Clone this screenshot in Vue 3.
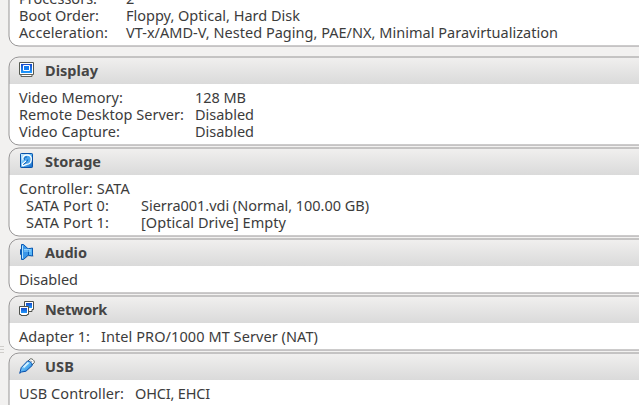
<script setup>
import { onMounted, ref } from 'vue'

// Each text entry is [text, width]; col is the width of the label column.
const cards = [
  { rows: [
    { label: ['Processors:', 78], value: ['2', 8], col: 107 },
    { label: ['Boot Order:', 80], value: ['Floppy, Optical, Hard Disk', 174], col: 107 },
    { label: ['Acceleration:', 89], value: ['VT-x/AMD-V, Nested Paging, PAE/NX, Minimal Paravirtualization', 432], col: 107 }
  ] },
  { icon: 'display', title: ['Display', 53], rows: [
    { label: ['Video Memory:', 104], value: ['128 MB', 51], col: 176 },
    { label: ['Remote Desktop Server:', 165], value: ['Disabled', 59], col: 176 },
    { label: ['Video Capture:', 101], value: ['Disabled', 59], col: 176 }
  ] },
  { icon: 'storage', title: ['Storage', 56], rows: [
    { label: ['Controller: SATA', 111], col: 122 },
    { label: ['SATA Port 0:', 83], value: ['Sierra001.vdi (Normal, 100.00 GB)', 228], col: 115, nested: true },
    { label: ['SATA Port 1:', 83], value: ['[Optical Drive] Empty', 145], col: 115, nested: true }
  ] },
  { icon: 'audio', title: ['Audio', 42], rows: [{ label: ['Disabled', 59], col: 90 }] },
  { icon: 'network', title: ['Network', 62], rows: [
    { label: ['Adapter 1:', 71], value: ['Intel PRO/1000 MT Server (NAT)', 217], col: 82 }
  ] },
  { icon: 'usb', title: ['USB', 29], rows: [
    { label: ['USB Controller:', 105], value: ['OHCI, EHCI', 75], col: 116 },
    { label: ['Device Filters:', 98], value: ['0 (0 active)', 76], col: 116 }
  ] }
]

const root = ref(null)
onMounted(() => {
  root.value.querySelectorAll('[data-width]').forEach((el) => {
    const extra = Number(el.dataset.width) - el.getBoundingClientRect().width
    el.style.letterSpacing = extra / el.textContent.length + 'px'
  })
})
</script>

<template>
  <main ref="root" class="details">
    <div class="splitter"><i /><i /><i /></div>
    <div class="cards">
      <section v-for="(card, n) in cards" :key="n" class="card" :class="{ system: !card.title }">
        <div class="panel">
          <header v-if="card.title">
            <svg class="icon" viewBox="0 0 16 16">
              <defs>
                <linearGradient id="blue" x1="0" y1="0" x2="0" y2="1"><stop stop-color="#1648c8" /><stop offset="1" stop-color="#209cff" /></linearGradient>
                <linearGradient id="light" x1="0" y1="0" x2="1" y2="1"><stop stop-color="#d8f3ff" /><stop offset=".5" stop-color="#59b5f4" /><stop offset="1" stop-color="#1264c3" /></linearGradient>
              </defs>
              <g v-if="card.icon === 'display'">
                <path d="M.5.5h14v12H13v2H2v-2H.5z" fill="#fff" stroke="#555950" />
                <path d="M2 2h11v9H2z" fill="url(#blue)" />
                <path d="M4.5 3.5h6v5h-6z" fill="#167bec" stroke="#fff" />
                <path d="M1 12.5h13M2 14.5h11" stroke="#62635e" />
              </g>
              <g v-else-if="card.icon === 'storage'">
                <rect x="1.5" y=".5" width="12" height="14" rx=".7" fill="url(#light)" stroke="#0852a9" />
                <path d="M4.2 7.2C2.8 4.3 5 2 8 2s4.6 1.8 4.3 4.5c-.2 2.8-2.2 4.8-4.6 4.8L4 12.9c-1.1-.5-.6-2 .2-2.5l3-2.4" fill="#4ca6ee" stroke="#fff" stroke-width="1.3" />
                <path d="M5.4 6.8C5 4.5 6.4 3.6 8 4M4.4 11.5 8 8.5l.8-2" fill="none" stroke="#1261b2" />
              </g>
              <g v-else-if="card.icon === 'audio'">
                <path d="M4 15.5 9.5 12H15" fill="none" stroke="#8d9295" opacity=".5" />
                <path d="M1.5 5.5h2v5h-2z" fill="#9bd8ff" stroke="#0859b4" />
                <path d="M9.5 4.5h1.5l2.5-.5v8l-2.5-.5H9.5z" fill="#58b6f6" stroke="#0859b4" />
                <path d="M2.5.5h2l5 4.7v5.6l-5 4.7h-2z" fill="#3b96e8" stroke="#0859b4" />
                <path d="M3.5 1.5v13" stroke="#b8e5ff" />
                <path d="M5 5.5h6.5M5 7h7" stroke="#91d3ff" />
              </g>
              <g v-else-if="card.icon === 'network'">
                <path d="M5.5.5h9v8H13v2H7v-2H5.5z" fill="#fff" stroke="#4e514c" />
                <path d="M7 2h6v5H7z" fill="url(#blue)" />
                <path d="M.5 5.5h9v8H8v1H2v-1H.5z" fill="#fff" stroke="#4e514c" />
                <path d="M2 7h6v5H2z" fill="url(#blue)" />
              </g>
              <g v-else>
                <path d="m9 3 2.2-2c1.2-1.1 5 1.8 4 3.7L13 7" fill="#fff" stroke="#555951" />
                <path d="M.7 15.3 2.3 9.5 8.5 3c2.3-.2 5.1 2 4.7 4.5L7 13.2l-4.5.8z" fill="url(#light)" stroke="#074eaa" />
                <path d="m4.5 9.3 5-4.7" stroke="#d8f3ff" stroke-width="1.8" />
                <path d="m12 2.8.8.8" stroke="#50544f" />
              </g>
            </svg>
            <h2><span :data-width="card.title[1]">{{ card.title[0] }}</span></h2>
          </header>
          <div class="rows">
            <div v-for="row in card.rows" :key="row.label[0]" class="row" :class="{ nested: row.nested }">
              <div class="label" :style="{ width: row.col + 'px' }"><span :data-width="row.label[1]">{{ row.label[0] }}</span></div>
              <div v-if="row.value"><span :data-width="row.value[1]">{{ row.value[0] }}</span></div>
            </div>
          </div>
        </div>
        <svg class="frame"><rect class="outline" x="1" y="1" width="110%" rx="10" /></svg>
      </section>
    </div>
  </main>
</template>

<style>
body { background: #f2f1f0; overflow: hidden; }
</style>
<style scoped>
.details { display: flex; height: 405px; overflow: hidden; background: #f2f1f0; color: #3c3c3c; font: 14.5px/17px "Noto Sans", sans-serif; }
.splitter { display: flex; flex: 0 0 8px; flex-direction: column; gap: 2px; padding-top: 346px; box-sizing: border-box; }
.splitter i { width: 4px; height: 1px; background: #cfcdca; }
.cards { display: flex; flex: 1; flex-direction: column; gap: 1px; min-width: 0; }
.card { position: relative; flex: none; padding: 1px 0 1px 1px; }
.panel { border-radius: 10px 0 0 10px; background: #fff; overflow: hidden; }
.frame { position: absolute; inset: 0; width: 100%; height: 100%; pointer-events: none; }
.outline { height: calc(100% - 2px); fill: none; stroke: #989697; stroke-width: 1px; }
.system { margin: -17px 0 8px; }
header { display: flex; align-items: flex-start; gap: 10px; box-sizing: border-box; height: 27px; padding: 5px 0 0 10px; background: linear-gradient(#f1f0ef, #dadada); }
.icon { width: 16px; height: 16px; }
h2 { margin: 0; font-size: 14.5px; font-weight: 700; line-height: 17px; color: #454545; }
.rows { padding: 5px 10px; }
.system .rows { padding-top: 6px; }
.row { display: flex; height: 17px; white-space: nowrap; }
.label { flex: none; }
.nested { padding-left: 7px; }
</style>
